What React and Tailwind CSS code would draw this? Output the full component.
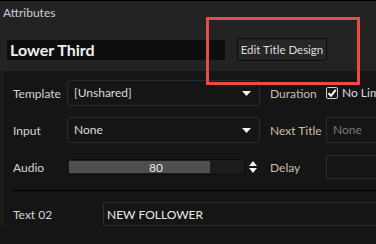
import React from "react";

const font = { fontFamily: 'Lato, "Liberation Sans", sans-serif' };

function DownArrow() {
  return (
    <svg width="9" height="5" viewBox="0 0 9 5" className="shrink-0">
      <polygon points="0,0 9,0 4.5,5" fill="#f2f2f2" />
    </svg>
  );
}

function Select({ value }) {
  return (
    <div className="flex h-[26px] w-[193px] shrink-0 items-center justify-between rounded-[3px] border border-[#2b2b2b] bg-[#151515] pl-[6px] pr-[8px]">
      <span className="text-[12px] text-[#dcdcdc]">{value}</span>
      <DownArrow />
    </div>
  );
}

function Label({ children, w, right }) {
  return (
    <div
      className={`shrink-0 whitespace-nowrap pt-[2px] text-[12px] ${right ? "text-[#c9bfa6]" : "text-[#d3d6da]"}`}
      style={{ width: w }}
    >
      {children}
    </div>
  );
}

export default function App() {
  return (
    <div className="relative h-[244px] w-[376px] overflow-hidden bg-[#151515]" style={font}>
      <div className="h-[71px] border-t border-black bg-[#232323]">
        <div className="pl-[3px] pt-[5px] text-[12px] leading-[14px] text-[#c9d0d8]">Attributes</div>
        <div className="mt-[18px] flex items-center pl-[7px]">
          <div className="flex h-[20px] w-[218px] shrink-0 items-center bg-[#0e0e0e] pl-[3px] text-[16px] font-bold leading-none text-[#f0f0f0]">
            Lower Third
          </div>
          <button className="ml-[12px] h-[23px] w-[90px] shrink-0 whitespace-nowrap rounded-[3px] border border-[#0b0b0b] bg-[#262626] text-[11.5px] text-[#dcdcdc]">
            Edit Title Design
          </button>
        </div>
      </div>

      <div className="border-l-4 border-[#1c1c1c] pl-[9px] pt-[9px]">
        <div className="flex h-[26px] items-center">
          <Label w={54}>Template</Label>
          <Select value="[Unshared]" />
          <div className="w-[10px] shrink-0" />
          <Label w={56} right>Duration</Label>
          <div className="flex h-[12px] w-[12px] shrink-0 items-center justify-center rounded-[2px] border border-[#cfcfcf] bg-[#1a1a1a]">
            <svg width="10" height="10" viewBox="0 0 10 10">
              <path d="M1.5 5.2 L4 7.8 L8.7 1.8" stroke="#ffffff" strokeWidth="2" fill="none" />
            </svg>
          </div>
          <span className="ml-[4px] whitespace-nowrap text-[12px] text-[#dcdcdc]">No Limit</span>
        </div>

        <div className="mt-[11px] flex h-[26px] items-center">
          <Label w={54}>Input</Label>
          <Select value="None" />
          <div className="w-[10px] shrink-0" />
          <Label w={56} right>Next Title</Label>
          <div className="flex h-[26px] w-[80px] shrink-0 items-center rounded-l-[3px] border border-r-0 border-[#2b2b2b] pl-[6px] text-[12px] text-[#7c7c7c]">
            None
          </div>
        </div>

        <div className="mt-[12px] flex h-[24px] items-center">
          <Label w={54}>Audio</Label>
          <div className="flex h-[16px] w-[178px] shrink-0 rounded-[3px] border border-[#0c0c0c] bg-[#1c1c1c] p-[1px]">
            <div className="relative h-full w-full">
              <div className="absolute inset-y-0 left-0 w-[141px] bg-[#4f4f4f]" />
              <div className="relative text-center text-[12px] leading-[13px] text-[#e6e6e6]">80</div>
            </div>
          </div>
          <div className="ml-[4px] flex w-[8px] shrink-0 flex-col items-center gap-[2px]">
            <svg width="8" height="5" viewBox="0 0 8 5">
              <polygon points="0,5 8,5 4,0" fill="#f2f2f2" />
            </svg>
            <svg width="8" height="5" viewBox="0 0 8 5">
              <polygon points="0,0 8,0 4,5" fill="#f2f2f2" />
            </svg>
          </div>
          <div className="w-[13px] shrink-0" />
          <Label w={56} right>Delay</Label>
          <div className="h-[24px] w-[80px] shrink-0 rounded-l-[3px] border border-r-0 border-[#2b2b2b]" />
        </div>

        <div className="mt-[11px] h-px bg-black" />

        <div className="mt-[11px] flex h-[24px] items-center">
          <Label w={90}>Text 02</Label>
          <div className="flex h-[24px] flex-1 items-center rounded-l-[3px] border border-r-0 border-[#2e2e2e] pl-[3px] pt-[2px] text-[12px] text-[#ececec]">
            NEW FOLLOWER
          </div>
        </div>
      </div>

      <div className="absolute left-[206px] top-[17px] h-[68px] w-[154px] border-[3px] border-[#e84c44]" />
    </div>
  );
}
